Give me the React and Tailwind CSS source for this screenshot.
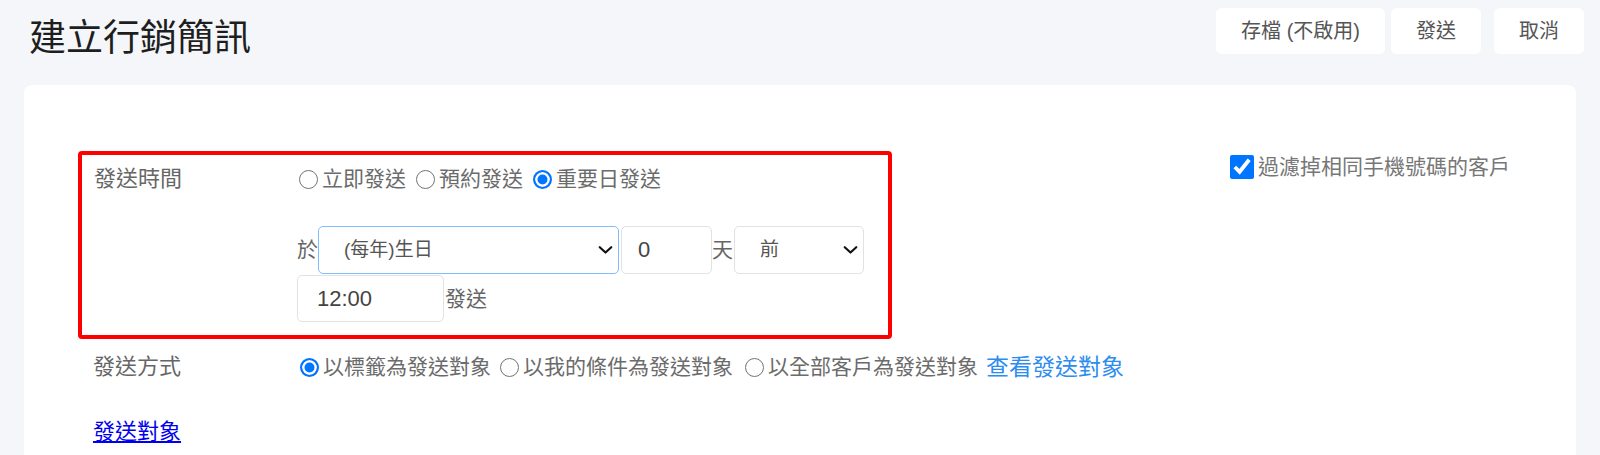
import { useState } from 'react'

const FONT = "font-['Liberation_Sans','Noto_Sans_CJK_TC',sans-serif]"

function Chevron() {
  return (
    <svg width="15" height="9" viewBox="0 0 15 9" className="pointer-events-none absolute right-[6px] top-1/2 -translate-y-1/2">
      <path d="M1.75 1.75 L7.5 7 L13.25 1.75" fill="none" stroke="#111" strokeWidth="2.2" strokeLinecap="round" strokeLinejoin="round" />
    </svg>
  )
}

function Radio({ name, checked, label, first, gap = 'ml-[10px]' }) {
  return (
    <label className={`flex items-center ${first ? 'ml-[2px]' : gap}`}>
      <input
        type="radio"
        name={name}
        defaultChecked={checked}
        className="m-0 h-[19px] w-[19px] shrink-0 appearance-none rounded-full border-[1.5px] border-[#737373] bg-white checked:border-2 checked:border-[#0075ff] checked:bg-[#0075ff] checked:shadow-[inset_0_0_0_2.5px_white]"
      />
      <span className="ml-[4px] text-[21px] leading-[30px] text-[#6b6b6b]">{label}</span>
    </label>
  )
}

export default function App() {
  const [target, setTarget] = useState('birthday')
  const [days, setDays] = useState('0')
  const [when, setWhen] = useState('before')
  const [time, setTime] = useState('12:00')

  return (
    <div className={`min-h-screen bg-[#f5f6fa] ${FONT}`}>
      <header className="flex h-[85px] items-start justify-between pl-[29px] pr-[16px]">
        <h1 className="mt-[17px] text-[37px] leading-[44px] text-[#1e1e1e]">建立行銷簡訊</h1>
        <div className="mt-[8px] flex">
          <button className="h-[46px] rounded-[6px] bg-white px-[25px] text-[20px] text-[#555]">存檔 (不啟用)</button>
          <button className="ml-[6px] h-[46px] rounded-[6px] bg-white px-[25px] text-[20px] text-[#555]">發送</button>
          <button className="ml-[13px] h-[46px] rounded-[6px] bg-white px-[25px] text-[20px] text-[#555]">取消</button>
        </div>
      </header>

      <main className="mx-[24px] rounded-[8px] bg-white pb-[40px] pl-[54px] pt-[66px]">
        <div className="flex items-start">
          <div className="flex h-[188px] w-[814px] rounded-[4px] border-4 border-[#ff0000] pl-[12px] pt-[9px]">
            <div className="w-[203px] text-[22px] leading-[30px] text-[#666]">發送時間</div>
            <div>
              <div className="flex h-[30px] items-center">
                <Radio name="sendtime" label="立即發送" first />
                <Radio name="sendtime" label="預約發送" />
                <Radio name="sendtime" label="重要日發送" checked />
              </div>

              <div className="mt-[32px] flex h-[48px] items-center">
                <span className="w-[21px] text-[21px] text-[#666]">於</span>
                <div className="relative">
                  <select
                    value={target}
                    onChange={(e) => setTarget(e.target.value)}
                    className="h-[48px] w-[301px] appearance-none rounded-[5px] border border-[#80bdff] bg-white pl-[25px] text-[19px] text-[#555] outline-none"
                  >
                    <option value="birthday">(每年)生日</option>
                  </select>
                  <Chevron />
                </div>
                <input
                  value={days}
                  onChange={(e) => setDays(e.target.value)}
                  className="ml-[2px] h-[48px] w-[91px] rounded-[5px] border border-[#e2e2e2] pl-[16px] text-[22px] text-[#444] outline-none"
                />
                <span className="w-[22px] text-[21px] text-[#666]">天</span>
                <div className="relative">
                  <select
                    value={when}
                    onChange={(e) => setWhen(e.target.value)}
                    className="h-[48px] w-[130px] appearance-none rounded-[5px] border border-[#e2e2e2] bg-white pl-[25px] text-[19px] text-[#555] outline-none"
                  >
                    <option value="before">前</option>
                    <option value="after">後</option>
                  </select>
                  <Chevron />
                </div>
              </div>

              <div className="mt-[1px] flex h-[47px] items-center">
                <input
                  value={time}
                  onChange={(e) => setTime(e.target.value)}
                  className="h-[47px] w-[147px] rounded-[5px] border border-[#e2e2e2] pl-[19px] text-[22px] text-[#444] outline-none"
                />
                <span className="ml-[1px] text-[21px] text-[#666]">發送</span>
              </div>
            </div>
          </div>

          <label className="ml-[338px] mt-[0px] flex items-center">
            <input type="checkbox" defaultChecked className="m-0 h-[24px] w-[24px] accent-[#0075ff]" />
            <span className="ml-[4px] text-[21px] text-[#777]">過濾掉相同手機號碼的客戶</span>
          </label>
        </div>

        <div className="mt-[13px] flex h-[30px] items-center pl-[15px]">
          <div className="w-[205px] text-[22px] leading-[30px] text-[#666]">發送方式</div>
          <Radio name="method" label="以標籤為發送對象" checked first />
          <Radio name="method" label="以我的條件為發送對象" gap="ml-[9px]" />
          <Radio name="method" label="以全部客戶為發送對象" gap="ml-[12px]" />
          <a href="#" className="ml-[8px] text-[23px] leading-[30px] text-[#2d8cf0]">查看發送對象</a>
        </div>

        <div className="mt-[35px] pl-[15px]">
          <a href="#" className="text-[22px] leading-[30px] text-[#0000ee] underline">發送對象</a>
        </div>
      </main>
    </div>
  )
}
